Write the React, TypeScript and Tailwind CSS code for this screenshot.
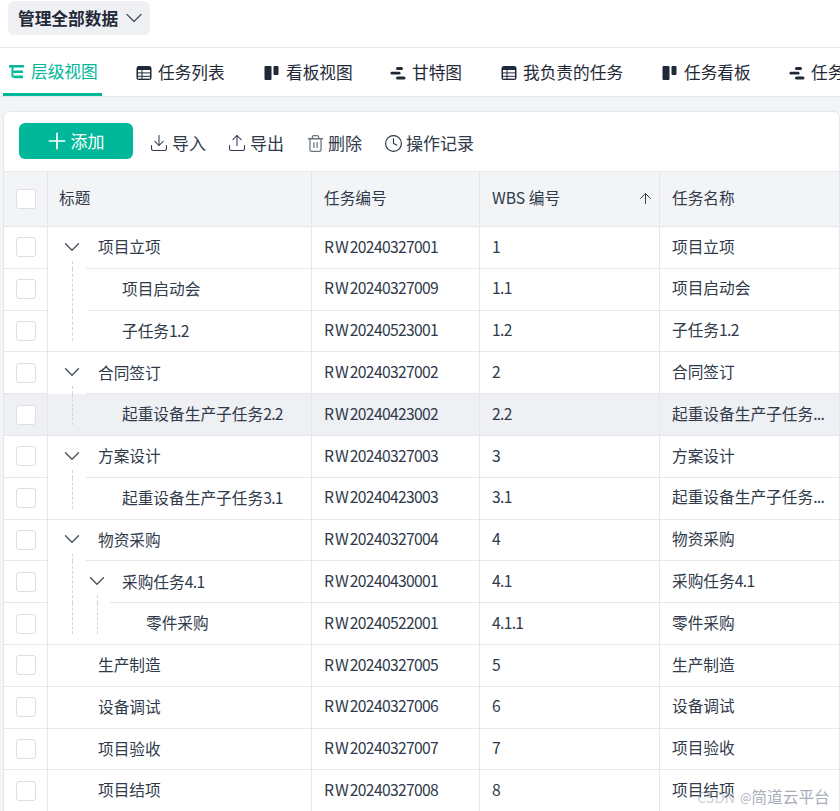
import { ChevronDown, Plus, ArrowUp, Download, Upload, Trash2, Clock } from "lucide-react";

const TreeIcon = () => (
  <svg width="16" height="16" viewBox="0 0 16 16" fill="#00b899">
    <rect x="0" y="1" width="15" height="2.6" rx="0.6" />
    <rect x="2.5" y="3" width="2" height="10" />
    <rect x="5" y="6.4" width="9" height="2.6" rx="0.6" />
    <rect x="5" y="11.6" width="9" height="2.6" rx="0.6" />
    <rect x="3" y="7" width="3" height="1.4" />
    <rect x="3" y="12.2" width="3" height="1.4" />
  </svg>
);

const TableIcon = () => (
  <svg width="16" height="16" viewBox="0 0 16 16">
    <rect x="0.5" y="1" width="15" height="14" rx="2.5" fill="#1f2937" />
    <rect x="2" y="5" width="3.5" height="2.4" fill="#fff" />
    <rect x="6.5" y="5" width="7.5" height="2.4" fill="#fff" />
    <rect x="2" y="8.4" width="3.5" height="2.4" fill="#fff" />
    <rect x="6.5" y="8.4" width="7.5" height="2.4" fill="#fff" />
    <rect x="2" y="11.8" width="3.5" height="1.8" fill="#fff" />
    <rect x="6.5" y="11.8" width="7.5" height="1.8" fill="#fff" />
  </svg>
);

const BoardIcon = () => (
  <svg width="16" height="16" viewBox="0 0 16 16" fill="#1f2937">
    <rect x="0.5" y="1" width="7" height="14" rx="1" />
    <rect x="9.5" y="1" width="5" height="9" rx="1" />
  </svg>
);

const GanttIcon = () => (
  <svg width="16" height="16" viewBox="0 0 16 16" fill="#1f2937">
    <rect x="6" y="2" width="7" height="3" rx="1.5" />
    <rect x="0.5" y="6.8" width="10" height="2.8" rx="1.4" />
    <rect x="6" y="11.4" width="9.5" height="3" rx="1.5" />
  </svg>
);

const tabs = [
  { label: "任务列表", icon: <TableIcon />, w: "w-[128px]" },
  { label: "看板视图", icon: <BoardIcon />, w: "w-[126px]" },
  { label: "甘特图", icon: <GanttIcon />, w: "w-[111px]" },
  { label: "我负责的任务", icon: <TableIcon />, w: "w-[161px]" },
  { label: "任务看板", icon: <BoardIcon />, w: "w-[127px]" },
  { label: "任务甘特图", icon: <GanttIcon />, w: "w-[120px]" },
];

type Row = {
  title: string;
  code: string;
  wbs: string;
  level: number;
  open?: boolean;
  cut?: number;
  guides?: { x: number; top: number; bottom: number }[];
  name?: string;
  active?: boolean;
};

const rows: Row[] = [
  { title: "项目立项", code: "RW20240327001", wbs: "1", level: 0, open: true, cut: 38, guides: [{ x: 24, top: 34, bottom: 0 }] },
  { title: "项目启动会", code: "RW20240327009", wbs: "1.1", level: 1, cut: 39, guides: [{ x: 24, top: 0, bottom: 0 }] },
  { title: "子任务1.2", code: "RW20240523001", wbs: "1.2", level: 1, guides: [{ x: 24, top: 0, bottom: 11 }] },
  { title: "合同签订", code: "RW20240327002", wbs: "2", level: 0, open: true, cut: 38, guides: [{ x: 24, top: 34, bottom: 0 }] },
  { title: "起重设备生产子任务2.2", code: "RW20240423002", wbs: "2.2", level: 1, active: true, name: "起重设备生产子任务...", guides: [{ x: 24, top: 0, bottom: 11 }] },
  { title: "方案设计", code: "RW20240327003", wbs: "3", level: 0, open: true, cut: 38, guides: [{ x: 24, top: 34, bottom: 0 }] },
  { title: "起重设备生产子任务3.1", code: "RW20240423003", wbs: "3.1", level: 1, name: "起重设备生产子任务...", guides: [{ x: 24, top: 0, bottom: 11 }] },
  { title: "物资采购", code: "RW20240327004", wbs: "4", level: 0, open: true, cut: 38, guides: [{ x: 24, top: 34, bottom: 0 }] },
  { title: "采购任务4.1", code: "RW20240430001", wbs: "4.1", level: 1, open: true, cut: 62, guides: [{ x: 24, top: 0, bottom: 0 }, { x: 49, top: 34, bottom: 0 }] },
  { title: "零件采购", code: "RW20240522001", wbs: "4.1.1", level: 2, guides: [{ x: 24, top: 0, bottom: 11 }, { x: 49, top: 0, bottom: 11 }] },
  { title: "生产制造", code: "RW20240327005", wbs: "5", level: 0 },
  { title: "设备调试", code: "RW20240327006", wbs: "6", level: 0 },
  { title: "项目验收", code: "RW20240327007", wbs: "7", level: 0 },
  { title: "项目结项", code: "RW20240327008", wbs: "8", level: 0 },
];

const indent = ["pl-[50px]", "pl-[74px]", "pl-[98px]"];
const chevronPad = ["left-[11px]", "left-[36px]", "left-[60px]"];

// digits in the reference are a bit narrower than in Noto
const Mixed = ({ text }: { text: string }) => (
  <span>
    {text.split(/([0-9.]+)/).map((part, i) =>
      /[0-9.]/.test(part) ? (
        <span key={i} className="tracking-[-0.7px]">{part}</span>
      ) : (
        part
      )
    )}
  </span>
);

const Checkbox = () => (
  <span className="w-5 h-5 bg-white border border-[#dcdfe4] rounded-[3px]" />
);

const ToolBtn = ({ icon, label }: { icon: React.ReactNode; label: string }) => (
  <button className="flex items-center gap-[5px] text-[17px] text-[#2f3a4a]">
    <span className="w-4 flex items-center justify-center">{icon}</span>
    {label}
  </button>
);

export default function App() {
  return (
    <div className="relative w-[840px] h-[811px] overflow-hidden bg-[#f3f4f6] text-[#1f2937] font-['Noto_Sans_CJK_SC','Noto_Sans',sans-serif]">
      <div className="h-[48px] bg-white border-b border-[#e5e7eb] pl-2 pt-px">
        <button className="h-[34px] w-[142px] rounded-md bg-[#eef0f4] flex items-center pl-[10px] gap-[2px] font-bold text-[16.7px] text-[#1f2937]">
          <span className="pt-[1px]">管理全部数据</span>
          <ChevronDown size={28} strokeWidth={1.2} className="text-[#4b5563]" />
        </button>
      </div>

      <div className="h-[49px] bg-white border-b border-[#e5e7eb] pl-[3px] flex whitespace-nowrap overflow-hidden">
        <div className="w-[99px] shrink-0 h-[48px] border-b-[3px] border-[#00b899] flex items-center gap-[6px] pl-[6px] pt-[2px] text-[16.7px] text-[#00b899]">
          <TreeIcon />
          层级视图
        </div>
        <div className="flex pl-[34px]">
          {tabs.map((t) => (
            <div key={t.label} className={`${t.w} shrink-0 flex items-center gap-[6px] pt-[1px] text-[16.7px] text-[#1f2937]`}>
              {t.icon}
              {t.label}
            </div>
          ))}
        </div>
      </div>

      <div className="ml-[3px] mt-[14px] bg-white border border-[#e5e7eb] rounded-t-md h-[720px] overflow-hidden">
        <div className="h-[59px] flex items-center pl-[15px] gap-[18px] pb-[1px]">
          <button className="w-[114px] h-[36px] rounded-md bg-[#00b899] text-white text-[17px] flex items-center justify-center pr-[4px]">
            <Plus size={26} strokeWidth={1.6} className="mr-px" />
            添加
          </button>
          <div className="flex items-center gap-[23px] pt-[4px]">
            <ToolBtn icon={<Download size={20} strokeWidth={1.25} className="shrink-0" />} label="导入" />
            <ToolBtn icon={<Upload size={20} strokeWidth={1.25} className="shrink-0" />} label="导出" />
            <ToolBtn icon={<Trash2 size={19} strokeWidth={1.6} className="shrink-0 text-[#6b7280]" />} label="删除" />
            <ToolBtn icon={<Clock size={19} strokeWidth={1.5} className="shrink-0" />} label="操作记录" />
          </div>
        </div>

        <div className="grid grid-cols-[44px_264px_168px_180px_1fr] h-[56px] bg-[#f3f4f6] border-y border-[#e5e7eb] text-[15.7px] text-[#2f3a4a]">
          <div className="flex items-center justify-center border-r border-[#e5e7eb]">
            <Checkbox />
          </div>
          <div className="flex items-center pl-[11px] pb-[2px] border-r border-[#e5e7eb]">标题</div>
          <div className="flex items-center pl-3 pb-[2px] border-r border-[#e5e7eb]">任务编号</div>
          <div className="flex items-center justify-between pl-3 pr-[5px] pb-[2px] border-r border-[#e5e7eb]">
            WBS 编号
            <ArrowUp size={17} strokeWidth={1.4} />
          </div>
          <div className="flex items-center pl-3 pb-[2px]">任务名称</div>
        </div>

        {rows.map((r) => (
          <div
            key={r.code}
            className={`grid grid-cols-[44px_264px_168px_180px_1fr] h-[41.8px] text-[15.7px] text-[#2f3a4a] ${r.active ? "bg-[#eff0f4]" : "bg-white"}`}
          >
            <div className="flex items-center justify-center border-r border-b border-[#e5e7eb]">
              <Checkbox />
            </div>
            <div className={`relative flex items-center pb-[2px] border-r border-[#e5e7eb] ${indent[r.level]}`}>
              {r.open && (
                <ChevronDown size={26} strokeWidth={1.3} className={`absolute text-[#4b5563] ${chevronPad[r.level]}`} />
              )}
              {r.guides?.map((g) => (
                <span
                  key={g.x}
                  className="absolute border-l border-dashed border-[#d1d5db]"
                  style={{ left: g.x, top: g.top, bottom: g.bottom }}
                />
              ))}
              <Mixed text={r.title} />
              <span
                className="absolute right-0 bottom-0 h-px bg-[#e5e7eb]"
                style={{ left: r.cut ?? 0 }}
              />
            </div>
            <div className="flex items-center pl-3 pb-[2px] border-r border-b border-[#e5e7eb]">
              <span className="tracking-[1px]">RW</span>
              <Mixed text={r.code.slice(2)} />
            </div>
            <div className="flex items-center pl-3 pb-[2px] border-r border-b border-[#e5e7eb]">
              <Mixed text={r.wbs} />
            </div>
            <div className="flex items-center pl-3 pb-[2px] border-b border-[#e5e7eb] whitespace-nowrap overflow-hidden">
              <Mixed text={r.name ?? r.title} />
            </div>
          </div>
        ))}
      </div>

      <div className="absolute left-[697px] top-[785px] flex items-center gap-[5px] text-[15.7px] whitespace-nowrap pointer-events-none">
        <span className="text-[#9ca3af]/50 text-[14.5px]">CSDN</span>
        <span className="text-[#9ca3af]/90 flex items-center">
          <span className="text-[12px]">@</span>简道云平台
        </span>
      </div>
    </div>
  );
}
